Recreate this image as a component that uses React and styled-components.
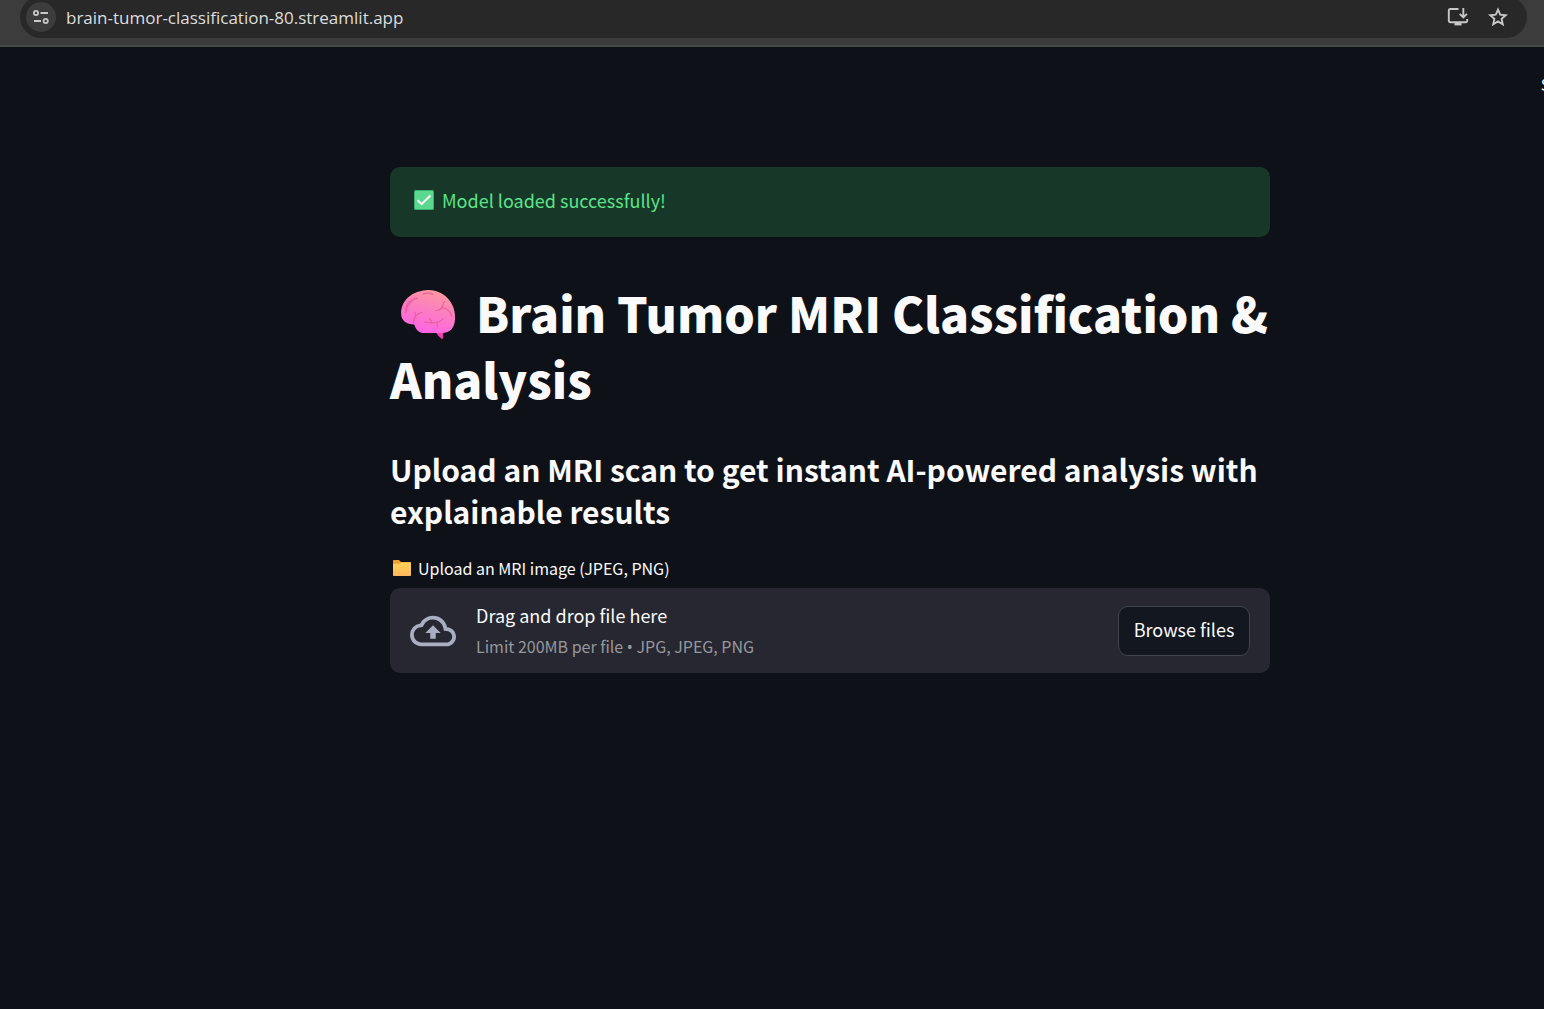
import React from "react";
import styled, { createGlobalStyle } from "styled-components";

const GlobalStyle = createGlobalStyle`
  *, *::before, *::after { box-sizing: border-box; }
  html, body { margin: 0; background: #0e1117; }
  body {
    color: #fafafa;
    font-family: "Noto Sans CJK SC", "Open Sans", sans-serif;
  }
`;

const Shell = styled.div`
  display: flex;
  flex-direction: column;
  min-height: 100vh;
  overflow: hidden;
  background: #0e1117;
`;

const BrowserBar = styled.div`
  display: flex;
  height: 47px;
  padding: 0 17px 9px 20px;
  background: #3c3c3c;
  border-bottom: 2px solid #474947;
`;

const AddressBar = styled.div`
  flex: 1;
  display: flex;
  align-items: center;
  height: 42px;
  margin-top: -4px;
  padding: 0 17px 0 6px;
  border-radius: 21px;
  background: #282828;
`;

const BarButton = styled.button`
  display: grid;
  place-items: center;
  width: ${(p) => p.$size}px;
  height: ${(p) => p.$size}px;
  padding: 0;
  border: 0;
  border-radius: 50%;
  background: ${(p) => (p.$filled ? "#3c3c3c" : "transparent")};
  color: #c7c7c7;
`;

const Address = styled.input`
  flex: 1;
  min-width: 0;
  height: 30px;
  margin: 0 10px;
  padding: 0;
  border: 0;
  outline: 0;
  background: transparent;
  color: #dedede;
  font: 400 17px "Open Sans", sans-serif;
`;

const BarActions = styled.div`
  display: flex;
  gap: 16px;
`;

/* The app canvas is wider than the window and runs past its right edge. */
const AppCanvas = styled.div`
  flex: 1;
  width: calc(100% + 116px);
`;

const AppHeader = styled.header`
  display: flex;
  justify-content: flex-end;
  height: 75px;
  padding: 22px 76px 0 0;
`;

const ShareButton = styled.button`
  height: 30px;
  padding: 0;
  border: 0;
  background: transparent;
  color: #fafafa;
  font: 400 16px/30px "Noto Sans CJK SC", sans-serif;
`;

const Main = styled.main`
  max-width: 880px;
  margin: 0 auto;
  padding-top: 45px;
`;

const Alert = styled.div`
  display: flex;
  align-items: center;
  gap: 8px;
  height: 70px;
  padding: 0 24px 4px;
  border-radius: 10px;
  background: #173828;
  color: #5ce488;
  font-size: 18px;
  line-height: 30px;
`;

const Title = styled.h1`
  margin: 0;
  padding-top: 42px;
  font-size: 48px;
  font-weight: 900;
  line-height: 66px;
`;

const Subtitle = styled.h3`
  margin: 0;
  padding-top: 37px;
  font-size: 30px;
  font-weight: 700;
  line-height: 42px;
`;

const UploadLabel = styled.label`
  display: flex;
  align-items: center;
  gap: 6px;
  padding: 22px 0 6px 2px;
  font-size: 16px;
  line-height: 28px;
`;

const Dropzone = styled.section`
  display: flex;
  align-items: center;
  gap: 20px;
  height: 85px;
  padding: 0 20px;
  border-radius: 10px;
  background: #262730;
`;

const DropText = styled.div`
  flex: 1;
  padding-bottom: 1px;
`;

const DropTitle = styled.div`
  font-size: 18px;
  line-height: 32px;
`;

const DropHint = styled.div`
  color: #97989c;
  font-size: 16px;
  line-height: 30px;
`;

const Bullet = styled.span`
  font-family: "Noto Sans", sans-serif;
`;

const HiddenFile = styled.input`
  display: none;
`;

const BrowseButton = styled.button`
  width: 132px;
  height: 50px;
  padding: 0 0 3px;
  border: 1px solid #41444c;
  border-radius: 10px;
  background: #131720;
  color: #fafafa;
  font: 400 18px/30px "Noto Sans CJK SC", sans-serif;
`;

const BrainSvg = styled.svg`
  margin: 0 21px 0 11px;
  vertical-align: -6px;
`;

function TuneIcon() {
  return (
    <svg width="16" height="16" viewBox="0 0 16 16" fill="none" stroke="currentColor" strokeWidth="1.8" aria-hidden="true">
      <circle cx="3" cy="4" r="2.1" />
      <path d="M7.5 4H15M1 12h7" />
      <circle cx="12.7" cy="12" r="2.1" />
    </svg>
  );
}

function InstallIcon() {
  return (
    <svg width="22" height="20" viewBox="0 0 22 20" fill="none" stroke="currentColor" strokeWidth="1.9" aria-hidden="true">
      <path d="M11.5 2H3.2C2.4 2 1.8 2.6 1.8 3.4v10.4c0 .8.6 1.4 1.4 1.4h15.6c.8 0 1.4-.6 1.4-1.4V12" />
      <path d="M16.3 1v9M12.7 6.8l3.6 3.6 3.6-3.6" />
      <path d="M7.5 15h7v3.4h-7z" fill="currentColor" stroke="none" />
    </svg>
  );
}

function StarIcon() {
  return (
    <svg width="20" height="20" viewBox="0 0 20 20" fill="none" stroke="currentColor" strokeWidth="1.9" aria-hidden="true">
      <path d="M10 2.6l2.2 5.1 5.6.5-4.2 3.7 1.2 5.4-4.8-2.9-4.8 2.9 1.2-5.4L2.2 8.2l5.6-.5z" />
    </svg>
  );
}

function CheckIcon() {
  return (
    <svg width="20" height="20" viewBox="0 0 20 20" aria-hidden="true">
      <rect width="20" height="20" rx="1.5" fill="#3fae74" />
      <rect x="1" y="1" width="18" height="18" rx="1" fill="#5bd890" />
      <path d="M3.6 10.2l4 4L16.4 5.5" fill="none" stroke="#fff" strokeWidth="2" />
    </svg>
  );
}

function FolderIcon() {
  return (
    <svg width="20" height="18" viewBox="0 0 20 18" aria-hidden="true">
      <defs>
        <linearGradient id="folder" x1="0" y1="0" x2="0" y2="1">
          <stop offset="0" stopColor="#ffd357" />
          <stop offset="1" stopColor="#fdb75b" />
        </linearGradient>
      </defs>
      <path d="M1 2c0-.6.4-1 1-1h4.5c.6 0 1 .3 1.5.9L9 3h9c.6 0 1 .4 1 1v3H1z" fill="#eda12f" />
      <path d="M1 4.8h6L9.2 3.5H18c.6 0 1 .4 1 1V16c0 .6-.4 1-1 1H2c-.6 0-1-.4-1-1z" fill="url(#folder)" />
    </svg>
  );
}

function BrainIcon() {
  return (
    <BrainSvg width="54" height="49" viewBox="0 0 54 49" aria-hidden="true">
      <defs>
        <linearGradient id="brain" x1=".7" y1="0" x2=".35" y2="1">
          <stop offset="0" stopColor="#ff9a9c" />
          <stop offset=".45" stopColor="#fc7fc0" />
          <stop offset="1" stopColor="#ff62e6" />
        </linearGradient>
        <linearGradient id="lobe" x1="0" y1="0" x2="1" y2=".4">
          <stop offset="0" stopColor="#d9508f" stopOpacity=".6" />
          <stop offset="1" stopColor="#ff7bc4" stopOpacity="0" />
        </linearGradient>
      </defs>
      <path d="M34 41h8v7c0 1-1 1.2-1.8.6C37.8 46.5 36 44 34 41z" fill="#f23db4" />
      <path d="M25 .2C35-.6 44 4 48.5 10.5 53 16 54.8 24 53.8 31c-.6 7-5 12-12.5 12H23c-5 0-8.2-3.5-9.8-8.6C6 34.5.3 31 .1 24-.3 12 9 1.5 25 .2z" fill="url(#brain)" />
      <path d="M4 24C2.5 14 9 6.5 18 4.5c2.5 0 1.5 3-1 4C10 11 8.5 18 4 24z" fill="url(#lobe)" />
      <path d="M12 33.5c0-6 2-9.5 8.5-11-2 5-3.5 8-8.5 11z" fill="url(#lobe)" />
      <g fill="none" stroke="#e2578f" strokeOpacity=".8" strokeWidth="1.1" strokeLinecap="round" strokeLinejoin="round">
        <path d="M5 23C5 15 9 10 16.5 8.3M22 4.2c3-1.4 7-1.3 10 .3" />
        <path d="M12.5 32.5c0-6 2.5-9 8.5-10M14.7 25.5l-.7-3.3" />
        <path d="M34.5 20.5c4 0 6-1.5 7-4 .5-2 1-3.5 2-5M41.5 17.5c4.5 1 8 4 9.5 9" />
        <path d="M23.5 32c8 1.5 15.5 1 18.5-3.2M30.5 32.5c-.5-2-1-3-2-3.8M36 32.7c.5 1.5.6 3 .3 4.3" />
      </g>
    </BrainSvg>
  );
}

function CloudIcon() {
  return (
    <svg width="46" height="46" viewBox="0 0 24 24" fill="#a9aec1" aria-hidden="true">
      <path d="M19.35 10.04A7.49 7.49 0 0 0 12 4C9.11 4 6.6 5.64 5.35 8.04A5.994 5.994 0 0 0 0 14c0 3.31 2.69 6 6 6h13c2.76 0 5-2.24 5-5 0-2.64-2.05-4.78-4.65-4.96zM19 18H6c-2.21 0-4-1.79-4-4 0-2.05 1.53-3.76 3.56-3.97l1.07-.11.5-.95A5.469 5.469 0 0 1 12 6c2.62 0 4.88 1.86 5.39 4.43l.3 1.5 1.53.11A2.98 2.98 0 0 1 22 15c0 1.65-1.35 3-3 3zM8 13h2.55v3h2.9v-3H16l-4-4z" />
    </svg>
  );
}

export default function App() {
  return (
    <>
      <GlobalStyle />
      <Shell>
        <BrowserBar>
          <AddressBar>
            <BarButton $size={30} $filled aria-label="View site information">
              <TuneIcon />
            </BarButton>
            <Address aria-label="Address" defaultValue="brain-tumor-classification-80.streamlit.app" />
            <BarActions>
              <BarButton $size={24} aria-label="Install app">
                <InstallIcon />
              </BarButton>
              <BarButton $size={24} aria-label="Bookmark this page">
                <StarIcon />
              </BarButton>
            </BarActions>
          </AddressBar>
        </BrowserBar>
        <AppCanvas>
          <AppHeader>
            <ShareButton>Share</ShareButton>
          </AppHeader>
          <Main>
            <Alert role="status">
              <CheckIcon />
              Model loaded successfully!
            </Alert>
            <Title>
              <BrainIcon />
              Brain Tumor MRI Classification &amp; Analysis
            </Title>
            <Subtitle>Upload an MRI scan to get instant AI-powered analysis with explainable results</Subtitle>
            <UploadLabel htmlFor="mri-file">
              <FolderIcon />
              Upload an MRI image (JPEG, PNG)
            </UploadLabel>
            <Dropzone>
              <CloudIcon />
              <DropText>
                <DropTitle>Drag and drop file here</DropTitle>
                <DropHint>
                  Limit 200MB per file <Bullet>•</Bullet> JPG, JPEG, PNG
                </DropHint>
              </DropText>
              <HiddenFile id="mri-file" type="file" accept=".jpg,.jpeg,.png" />
              <BrowseButton type="button">Browse files</BrowseButton>
            </Dropzone>
          </Main>
        </AppCanvas>
      </Shell>
    </>
  );
}
